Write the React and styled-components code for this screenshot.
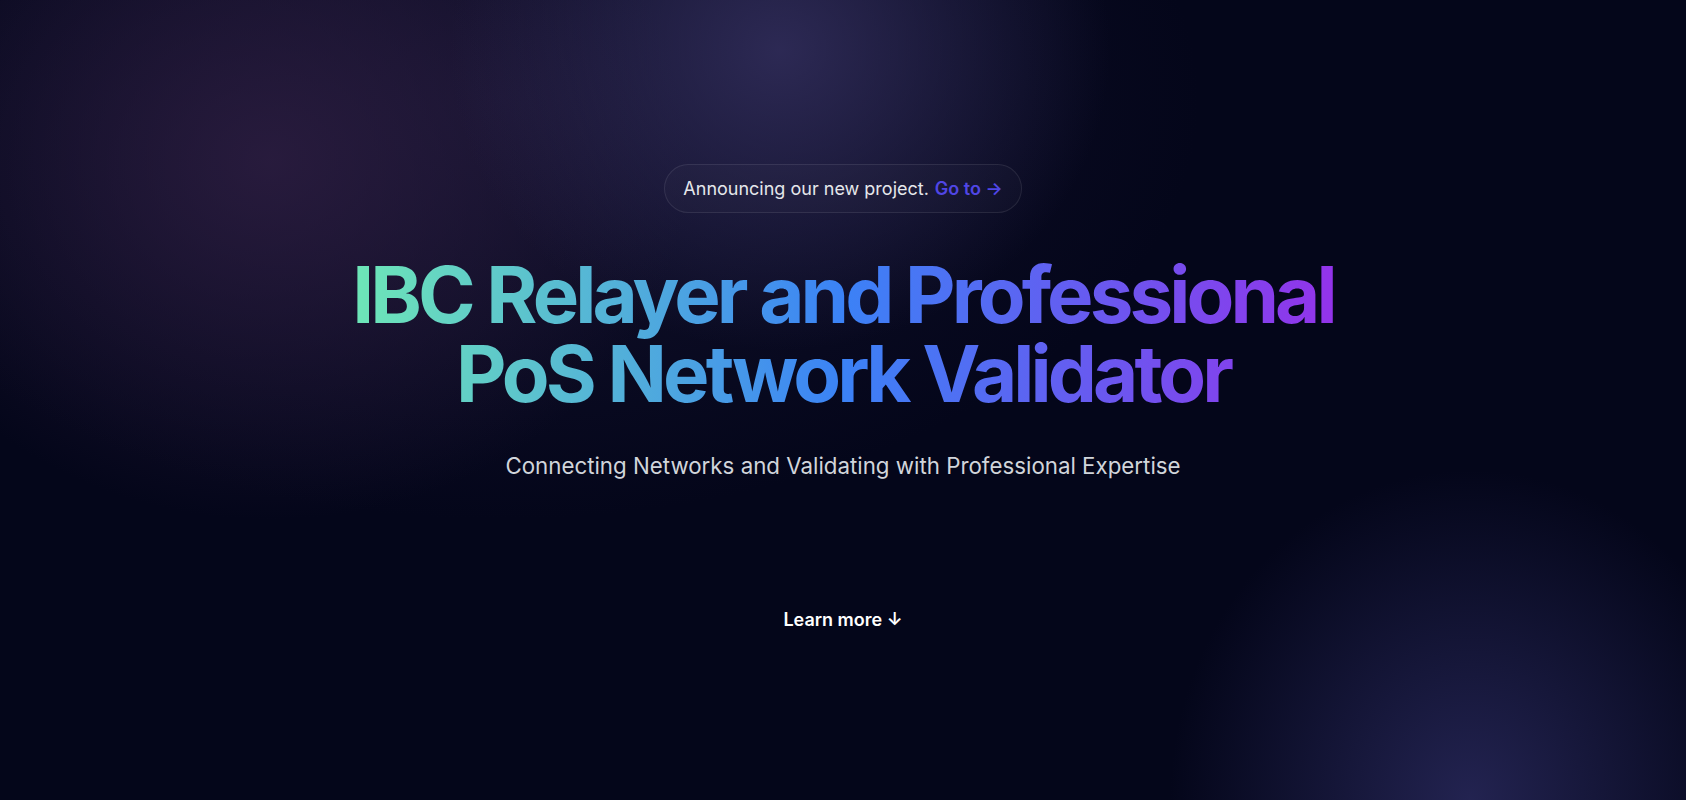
import React from "react";
import styled, { createGlobalStyle } from "styled-components";

const Global = createGlobalStyle`
  html, body { margin: 0; padding: 0; background: #04061a; }
  body { font-family: Inter, "Noto Sans", sans-serif; -webkit-font-smoothing: antialiased; }
  * { box-sizing: border-box; }
`;

const Page = styled.main`
  min-height: 800px;
  width: 100%;
  overflow: hidden;
  background-color: #04061a;
  background-image:
    radial-gradient(ellipse 330px 300px at 780px 50px, rgba(50, 46, 92, 0.85), rgba(50, 46, 92, 0) 100%),
    radial-gradient(ellipse 420px 360px at 270px 160px, rgba(46, 30, 66, 0.8), rgba(46, 30, 66, 0) 100%),
    radial-gradient(ellipse 300px 330px at 1470px 800px, rgba(40, 40, 90, 0.85), rgba(40, 40, 90, 0) 100%),
    radial-gradient(ellipse 700px 420px at 500px 100px, rgba(30, 26, 60, 0.6), rgba(30, 26, 60, 0) 100%);
  display: flex;
  flex-direction: column;
  align-items: center;
  padding-top: 164px;
`;

const Pill = styled.a`
  display: inline-flex;
  align-items: center;
  gap: 6px;
  padding: 10px 18px;
  border-radius: 9999px;
  border: 1px solid rgba(255, 255, 255, 0.09);
  background: rgba(255, 255, 255, 0.02);
  font-size: 18px;
  line-height: 27px;
  color: #e5e7eb;
  text-decoration: none;
`;

const PillLink = styled.span`
  color: #5046e5;
  font-weight: 600;
`;

const Heading = styled.h1`
  margin: 42px 0 0;
  width: fit-content;
  white-space: nowrap;
  font-size: 78px;
  line-height: 79px;
  font-weight: 700;
  letter-spacing: -0.05em;
  text-align: center;
  background-image: linear-gradient(90deg, #6ee7b7 0%, #3b82f6 50%, #9333ea 100%);
  -webkit-background-clip: text;
  background-clip: text;
  color: transparent;
`;

const Subtitle = styled.p`
  margin: 37px 0 0;
  font-size: 22.3px;
  line-height: 32px;
  color: #d1d5db;
  text-align: center;
`;

const LearnMore = styled.a`
  margin-top: 124px;
  font-size: 18px;
  line-height: 28px;
  font-weight: 600;
  color: #ffffff;
  text-decoration: none;
`;

export default function App() {
  return (
    <>
      <Global />
      <Page>
        <Pill href="#">
          Announcing our new project. <PillLink>Go to →</PillLink>
        </Pill>
        <Heading>
          IBC Relayer and Professional
          <br />
          PoS Network Validator
        </Heading>
        <Subtitle>Connecting Networks and Validating with Professional Expertise</Subtitle>
        <LearnMore href="#">Learn more ↓</LearnMore>
      </Page>
    </>
  );
}
